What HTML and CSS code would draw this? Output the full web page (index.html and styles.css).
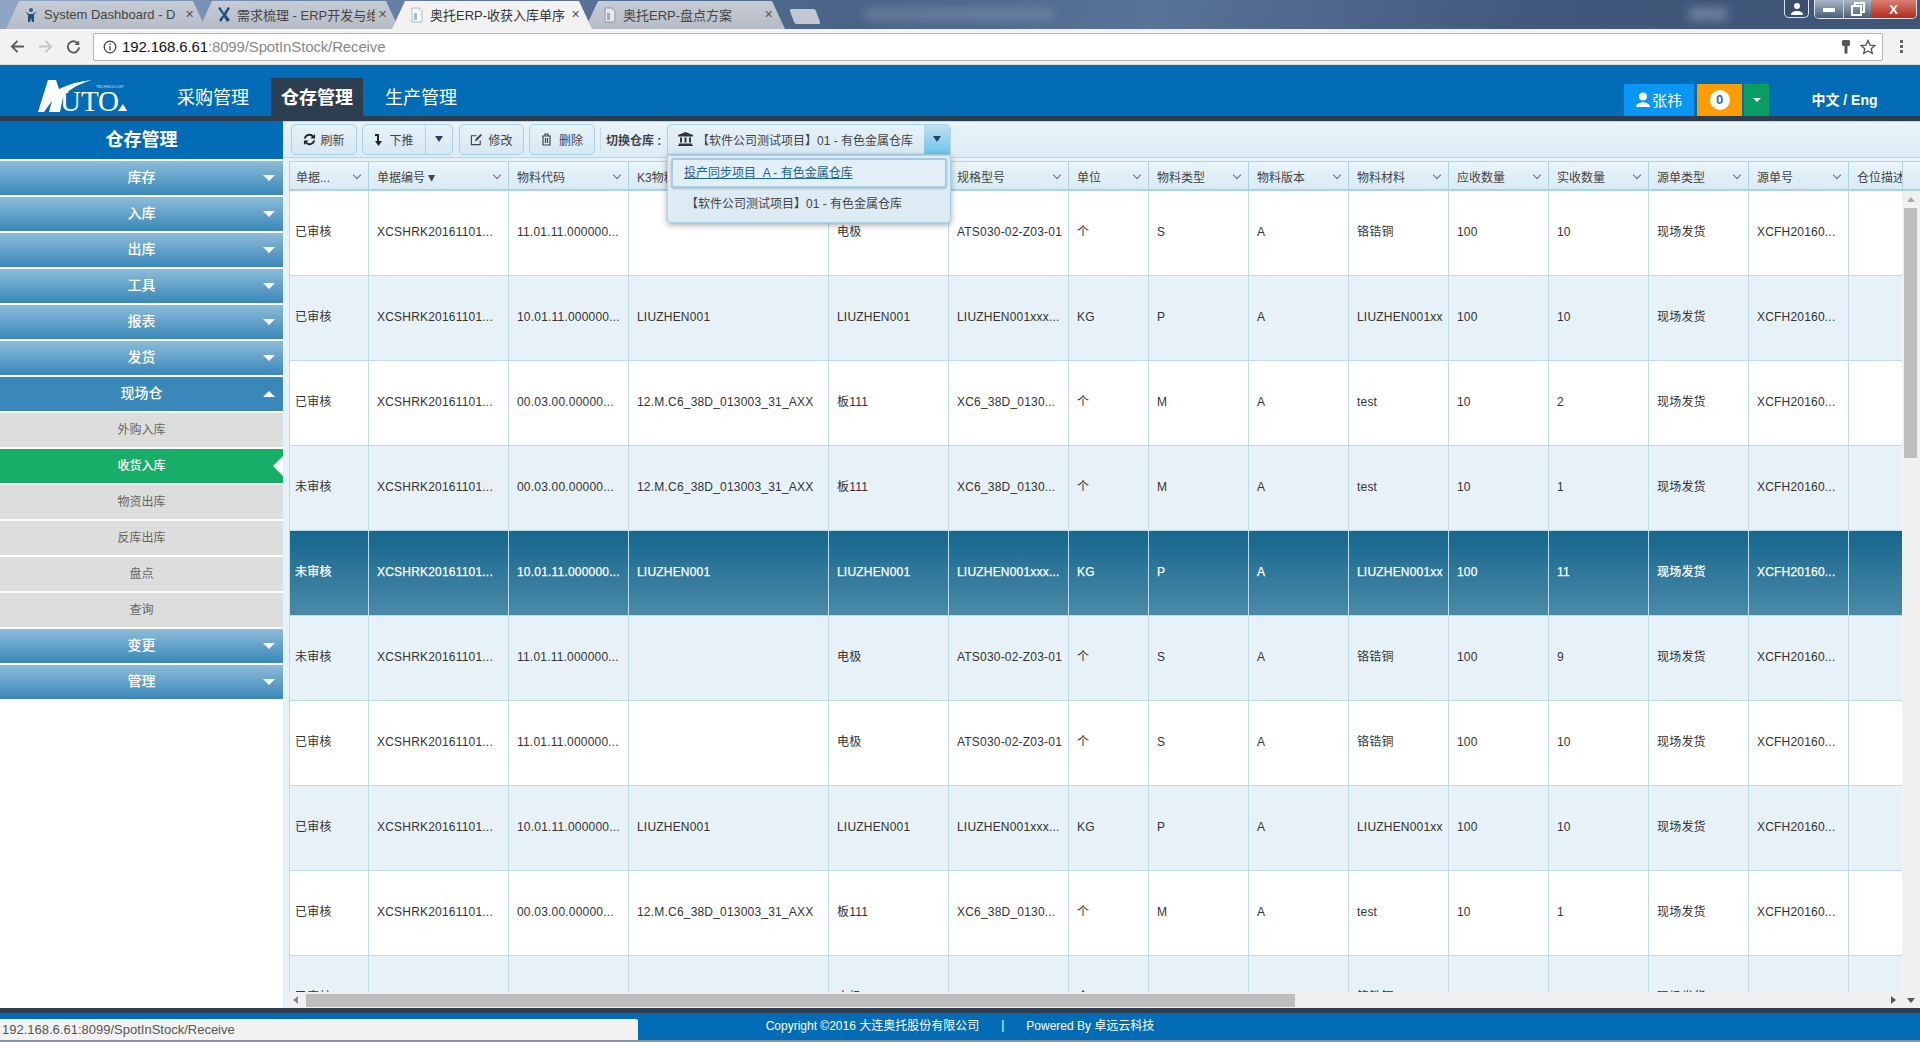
FILE: index.html
```html
<!DOCTYPE html>
<html lang="zh-CN">
<head>
    <meta charset="UTF-8">
    <title>奥托ERP-收获入库单序时簿</title>
    <link rel="stylesheet" href="styles.css">
</head>
<body>
<!-- browser frame -->
<div class="tabstrip">
    <div class="tab">
        <svg class="favicon" viewBox="0 0 16 16"><circle cx="8" cy="3" r="2" fill="#2a5f8f"/><path d="M2 4l3 4v7h2l1-4 1 4h2V8l3-4-4 3H6z" fill="#1d4f7c"/></svg>
        <span class="tab-title">System Dashboard - D</span><span class="tab-x">✕</span>
    </div>
    <div class="tab">
        <svg class="favicon" viewBox="0 0 16 16"><path d="M2 1l5 7-4 5 2 2 3-5 3 5 3-2-4-5 4-7-2-1-4 6-4-6z" fill="#1d4f7c"/></svg>
        <span class="tab-title">需求梳理 - ERP开发与维</span><span class="tab-x">✕</span>
    </div>
    <div class="tab tab-active">
        <svg class="favicon" viewBox="0 0 16 16"><path d="M3 1h7l3 3v11H3z" fill="#fff" stroke="#a9b8c6"/><path d="M5 6h3v7H5z" fill="#9cc0de"/></svg>
        <span class="tab-title">奥托ERP-收获入库单序</span><span class="tab-x">✕</span>
    </div>
    <div class="tab">
        <svg class="favicon" viewBox="0 0 16 16"><path d="M3 1h7l3 3v11H3z" fill="#e4e8ec" stroke="#8c9aa8"/><path d="M5 6h3v7H5z" fill="#8fb0cc"/></svg>
        <span class="tab-title">奥托ERP-盘点方案</span><span class="tab-x">✕</span>
    </div>
    <div class="newtab"></div>
    <div class="blur-title"></div>
    <div class="blur-small"></div>
    <div class="winbtns">
        <div class="winbtn winbtn-user">
            <svg width="14" height="14" viewBox="0 0 14 14"><circle cx="7" cy="4" r="3" fill="#fff"/><path d="M1 13c0-3 3-4 6-4s6 1 6 4z" fill="#fff"/></svg>
        </div>
        <div class="wingroup">
            <div class="winbtn winbtn-min"><i></i></div>
            <div class="winbtn winbtn-max">
                <svg width="14" height="14" viewBox="0 0 14 14" fill="none" stroke="#fff" stroke-width="2"><path d="M4 3V1h9v9h-2"/><path d="M1 4h9v9H1z"/></svg>
            </div>
            <div class="winbtn winbtn-close">X</div>
        </div>
    </div>
</div>
<div class="addrbar">
    <svg class="nav-icon" viewBox="0 0 16 16" fill="none" stroke="#5a5a5a" stroke-width="2"><path d="M15 8H2M8 2L2 8l6 6"/></svg>
    <svg class="nav-icon" viewBox="0 0 16 16" fill="none" stroke="#c4c4c4" stroke-width="2"><path d="M1 8h13M8 2l6 6-6 6"/></svg>
    <svg class="nav-icon" viewBox="0 0 16 16" fill="none" stroke="#5a5a5a" stroke-width="2"><path d="M13.5 6A6 6 0 1 0 14 9"/><path d="M14 1.5V6.5H9" fill="#5a5a5a" stroke="none"/></svg>
    <div class="urlbox">
        <svg class="info-icon" viewBox="0 0 14 14" fill="none" stroke="#444" stroke-width="1.3"><circle cx="7" cy="7" r="5.8"/><path d="M7 6v4.4M7 3.4v1.6"/></svg>
        <span class="url-host">192.168.6.61</span><span class="url-path">:8099/SpotInStock/Receive</span>
        <svg class="url-end" width="8" height="14" viewBox="0 0 8 14"><path d="M1 0h6l1 1v4l-1 1H5.500v7L4 14l-1.500-1V6H1L0 5V1z" fill="#555"/></svg>
        <svg class="url-star" width="16" height="16" viewBox="0 0 16 16" fill="none" stroke="#555" stroke-width="1.3"><path d="M8 1.5l2 4.6 4.9.4-3.7 3.2 1.1 4.8L8 12l-4.3 2.5 1.1-4.8L1.100 6.500 6 6.100z"/></svg>
    </div>
    <div class="menu-dots"><i></i><i></i><i></i></div>
</div>

<!-- app header -->
<div class="topbar">
    <svg class="logo" width="90" height="34" viewBox="0 0 90 34">
        <path d="M10 1h8l3 9C31 5 42 2 54 1 41 5 31 10 25 18l-3 15H11l3-11-8 11H0z" fill="#fff"/>
        <text x="58" y="9" class="logo-small" textLength="28" lengthAdjust="spacingAndGlyphs">TECHNOLOGY</text>
        <text x="22" y="32" class="logo-text" textLength="59" lengthAdjust="spacingAndGlyphs">UTO</text>
        <path d="M80 32l5-7 4 7z" fill="#fff"/>
    </svg>
    <a class="topnav">采购管理</a>
    <a class="topnav topnav-on">仓存管理</a>
    <a class="topnav">生产管理</a>
    <div class="userbox">
        <div class="user-name">
            <svg width="14" height="15" viewBox="0 0 14 15"><circle cx="7" cy="4.500" r="4" fill="#fff"/><path d="M0 15c0-3 3-4 7-5 4 1 7 2 7 5z" fill="#fff"/></svg>
            张祎
        </div>
        <div class="user-msg"><span class="msg-badge">0</span></div>
        <div class="user-more"><i></i></div>
        <div class="lang">中文 / Eng</div>
    </div>
</div>
<div class="darkline"></div>

<div class="main">
    <div class="sidebar">
        <div class="side-title">仓存管理</div>
        <div class="side-item">库存<i class="caret"></i></div>
        <div class="side-item">入库<i class="caret"></i></div>
        <div class="side-item">出库<i class="caret"></i></div>
        <div class="side-item">工具<i class="caret"></i></div>
        <div class="side-item">报表<i class="caret"></i></div>
        <div class="side-item">发货<i class="caret"></i></div>
        <div class="side-item side-open">现场仓<i class="caret caret-up"></i></div>
        <div class="side-sub">外购入库</div>
        <div class="side-sub side-cur">收货入库</div>
        <div class="side-sub">物资出库</div>
        <div class="side-sub">反库出库</div>
        <div class="side-sub">盘点</div>
        <div class="side-sub">查询</div>
        <div class="side-item">变更<i class="caret"></i></div>
        <div class="side-item">管理<i class="caret"></i></div>
    </div>

    <div class="content">
        <div class="toolbar">
            <div class="btn btn-refresh">
                <svg width="13" height="13" viewBox="0 0 14 14" fill="none" stroke="#222" stroke-width="2"><path d="M2 6a5 5 0 0 1 9-2"/><path d="M12 8a5 5 0 0 1-9 2"/><path d="M13 1v5H8z" fill="#222" stroke="none"/><path d="M1 13V8h5z" fill="#222" stroke="none"/></svg>
                刷新
            </div>
            <div class="btn btn-split">
                <span class="split-main">
                    <svg width="9" height="13" viewBox="0 0 9 13"><path d="M1 1h4v7h3l-3.500 5L1 8h2V3H1z" fill="#222"/></svg>
                    下推
                </span>
                <span class="split-caret"><i></i></span>
            </div>
            <div class="btn btn-edit">
                <svg width="13" height="13" viewBox="0 0 14 14" fill="none" stroke="#444" stroke-width="1.200"><path d="M11 8v4.500H1.500V3H7"/><path d="M5.500 9l.5-2.500L11.500 1 13 2.500 7.500 8z" fill="#444" stroke="none"/></svg>
                修改
            </div>
            <div class="btn btn-del">
                <svg width="11" height="13" viewBox="0 0 11 13" fill="none" stroke="#444" stroke-width="1.200"><path d="M1 3h9M4 3V1h3v2M2 3v9h7V3M4.500 5v5M6.500 5v5"/></svg>
                删除
            </div>
            <div class="tool-sep"></div>
            <label class="wh-label">切换仓库 :</label>
            <div class="wh-select">
                <span class="wh-current">
                    <svg width="15" height="14" viewBox="0 0 15 14"><path d="M7.500 0L15 3v1.500H0V3zM2 5.500h2v5H2zM6.500 5.500h2v5h-2zM11 5.500h2v5h-2zM1 11.500h13V13H1zM0 13h15v1H0z" fill="#333"/></svg>
                    【软件公司测试项目】01 - 有色金属仓库
                </span>
                <span class="wh-arrow"><i></i></span>
                <div class="wh-menu">
                    <div class="wh-opt wh-opt-hover">投产同步项目&nbsp; A - 有色金属仓库</div>
                    <div class="wh-opt">【软件公司测试项目】01 - 有色金属仓库</div>
                </div>
            </div>
        </div>

        <div class="gridwrap">
            <div class="grid-head">
                <div class="head-view">
                    <table class="gtable">
                        <colgroup><col class="c80"><col class="c140"><col class="c120"><col class="c200"><col class="c120"><col class="c120"><col class="c80"><col class="c100"><col class="c100"><col class="c100"><col class="c100"><col class="c100"><col class="c100"><col class="c100"><col class="c100"></colgroup>
                        <tr>
                            <th><div class="hc">单据...<i class="chev"></i></div></th>
                            <th><div class="hc"><span>单据编号 <b class="sort">▾</b></span><i class="chev"></i></div></th>
                            <th><div class="hc">物料代码<i class="chev"></i></div></th>
                            <th><div class="hc">K3物料代码<i class="chev"></i></div></th>
                            <th><div class="hc">物料名称<i class="chev"></i></div></th>
                            <th><div class="hc">规格型号<i class="chev"></i></div></th>
                            <th><div class="hc">单位<i class="chev"></i></div></th>
                            <th><div class="hc">物料类型<i class="chev"></i></div></th>
                            <th><div class="hc">物料版本<i class="chev"></i></div></th>
                            <th><div class="hc">物料材料<i class="chev"></i></div></th>
                            <th><div class="hc">应收数量<i class="chev"></i></div></th>
                            <th><div class="hc">实收数量<i class="chev"></i></div></th>
                            <th><div class="hc">源单类型<i class="chev"></i></div></th>
                            <th><div class="hc">源单号<i class="chev"></i></div></th>
                            <th><div class="hc">仓位描述<i class="chev"></i></div></th>
                        </tr>
                    </table>
                </div>
                <div class="head-fill"></div>
            </div>
            <div class="grid-mid">
                <div class="grid-body">
                    <table class="gtable">
                        <colgroup><col class="c80"><col class="c140"><col class="c120"><col class="c200"><col class="c120"><col class="c120"><col class="c80"><col class="c100"><col class="c100"><col class="c100"><col class="c100"><col class="c100"><col class="c100"><col class="c100"><col class="c100"></colgroup>
                        <tr><td>已审核</td><td>XCSHRK20161101...</td><td>11.01.11.000000...</td><td></td><td>电极</td><td>ATS030-02-Z03-01</td><td>个</td><td>S</td><td>A</td><td>铬锆铜</td><td>100</td><td>10</td><td>现场发货</td><td>XCFH20160...</td><td></td></tr>
                        <tr class="alt"><td>已审核</td><td>XCSHRK20161101...</td><td>10.01.11.000000...</td><td>LIUZHEN001</td><td>LIUZHEN001</td><td>LIUZHEN001xxx...</td><td>KG</td><td>P</td><td>A</td><td>LIUZHEN001xx</td><td>100</td><td>10</td><td>现场发货</td><td>XCFH20160...</td><td></td></tr>
                        <tr><td>已审核</td><td>XCSHRK20161101...</td><td>00.03.00.00000...</td><td>12.M.C6_38D_013003_31_AXX</td><td>板111</td><td>XC6_38D_0130...</td><td>个</td><td>M</td><td>A</td><td>test</td><td>10</td><td>2</td><td>现场发货</td><td>XCFH20160...</td><td></td></tr>
                        <tr class="alt"><td>未审核</td><td>XCSHRK20161101...</td><td>00.03.00.00000...</td><td>12.M.C6_38D_013003_31_AXX</td><td>板111</td><td>XC6_38D_0130...</td><td>个</td><td>M</td><td>A</td><td>test</td><td>10</td><td>1</td><td>现场发货</td><td>XCFH20160...</td><td></td></tr>
                        <tr class="sel"><td>未审核</td><td>XCSHRK20161101...</td><td>10.01.11.000000...</td><td>LIUZHEN001</td><td>LIUZHEN001</td><td>LIUZHEN001xxx...</td><td>KG</td><td>P</td><td>A</td><td>LIUZHEN001xx</td><td>100</td><td>11</td><td>现场发货</td><td>XCFH20160...</td><td></td></tr>
                        <tr class="alt"><td>未审核</td><td>XCSHRK20161101...</td><td>11.01.11.000000...</td><td></td><td>电极</td><td>ATS030-02-Z03-01</td><td>个</td><td>S</td><td>A</td><td>铬锆铜</td><td>100</td><td>9</td><td>现场发货</td><td>XCFH20160...</td><td></td></tr>
                        <tr><td>已审核</td><td>XCSHRK20161101...</td><td>11.01.11.000000...</td><td></td><td>电极</td><td>ATS030-02-Z03-01</td><td>个</td><td>S</td><td>A</td><td>铬锆铜</td><td>100</td><td>10</td><td>现场发货</td><td>XCFH20160...</td><td></td></tr>
                        <tr class="alt"><td>已审核</td><td>XCSHRK20161101...</td><td>10.01.11.000000...</td><td>LIUZHEN001</td><td>LIUZHEN001</td><td>LIUZHEN001xxx...</td><td>KG</td><td>P</td><td>A</td><td>LIUZHEN001xx</td><td>100</td><td>10</td><td>现场发货</td><td>XCFH20160...</td><td></td></tr>
                        <tr><td>已审核</td><td>XCSHRK20161101...</td><td>00.03.00.00000...</td><td>12.M.C6_38D_013003_31_AXX</td><td>板111</td><td>XC6_38D_0130...</td><td>个</td><td>M</td><td>A</td><td>test</td><td>10</td><td>1</td><td>现场发货</td><td>XCFH20160...</td><td></td></tr>
                        <tr class="alt"><td>已审核</td><td>XCSHRK20161101...</td><td>11.01.11.000000...</td><td></td><td>电极</td><td>ATS030-02-Z03-01</td><td>个</td><td>S</td><td>A</td><td>铬锆铜</td><td>100</td><td>10</td><td>现场发货</td><td>XCFH20160...</td><td></td></tr>
                    </table>
                </div>
                <div class="vbar">
                    <i class="arr-up"></i>
                    <div class="vthumb"></div>
                </div>
            </div>
            <div class="hbar">
                <i class="arr-left"></i>
                <div class="hthumb"></div>
                <i class="arr-right"></i>
                <div class="hbar-corner"><i class="arr-down"></i></div>
            </div>
        </div>
    </div>
</div>

<div class="darkline"></div>
<div class="footer">
    <span>Copyright ©2016 大连奥托股份有限公司</span>
    <span class="foot-sep">|</span>
    <span>Powered By 卓远云科技</span>
    <div class="statusbubble">192.168.6.61:8099/SpotInStock/Receive</div>
</div>
<div class="taskline"></div>
</body>
</html>
```

FILE: styles.css
```css
* {
    padding: 0;
    margin: 0;
    box-sizing: border-box;
}

html, body {
    height: 100%;
    overflow: hidden;
}

body {
    display: flex;
    flex-direction: column;
    width: 1920px;
    height: 1042px;
    font-family: "Liberation Sans", "Noto Sans CJK SC", sans-serif;
    font-size: 12px;
    color: #333;
    background: #fff;
}

/* browser frame */
.tabstrip {
    height: 29px;
    flex: none;
    display: flex;
    align-items: flex-end;
    padding-left: 6px;
    position: relative;
    background: linear-gradient(100deg, #8fa6c6 0, #5c769c 25%, #4a6488 45%, #587398 60%, #41587c 80%, #3e5578 100%);
}

.tab {
    width: 200px;
    height: 28px;
    margin-right: -7px;
    flex: none;
    display: flex;
    align-items: center;
    padding: 0 12px 1px 17px;
    background: linear-gradient(#c6ccd4, #b6bcc6);
    clip-path: polygon(0 100%, 13px 0, 187px 0, 100% 100%);
    font-size: 13px;
    color: #444;
}

.tab-active {
    background: #f2f2f2;
    color: #333;
    z-index: 1;
}

.favicon {
    width: 16px;
    height: 16px;
    flex: none;
    margin-right: 5px;
}

.tab-title {
    flex: 1;
    overflow: hidden;
    white-space: nowrap;
}

.tab-x {
    flex: none;
    margin-left: 3px;
    font-size: 11px;
    color: #555;
}

.newtab {
    width: 26px;
    height: 15px;
    margin: 0 0 5px 14px;
    background: #c2c8d2;
    transform: skewX(20deg);
    border-radius: 2px;
    flex: none;
}

.blur-title {
    width: 190px;
    height: 12px;
    margin: 0 0 9px 46px;
    background: rgba(150, 165, 190, 0.35);
    filter: blur(5px);
    flex: none;
}

.blur-small {
    width: 38px;
    height: 12px;
    margin: 0 193px 9px auto;
    background: rgba(170, 185, 205, 0.45);
    filter: blur(5px);
    flex: none;
}

.winbtns {
    position: absolute;
    top: 0;
    right: 3px;
    display: flex;
    gap: 5px;
}

.wingroup {
    display: flex;
    width: 103px;
    border: 1px solid #dfe4ea;
    border-top: 0;
    border-radius: 0 0 5px 5px;
    overflow: hidden;
}

.winbtn {
    height: 18px;
    display: flex;
    align-items: center;
    justify-content: center;
    background: linear-gradient(#a9b6c6, #4a5d78);
}

.winbtn-user {
    width: 25px;
    border: 1px solid #dfe4ea;
    border-top: 0;
    border-radius: 0 0 5px 5px;
    background: #3b4f6c;
}

.winbtn-min {
    width: 29px;
    border-right: 1px solid #c8d0da;
}

.winbtn-min i {
    width: 12px;
    height: 4px;
    margin-top: 2px;
    background: #fff;
}

.winbtn-max {
    width: 27px;
}

.winbtn-close {
    flex: 1;
    background: linear-gradient(#d98074, #b02c1c);
    color: #fff;
    font-weight: bold;
    font-size: 13px;
}

.addrbar {
    height: 36px;
    flex: none;
    display: flex;
    align-items: center;
    background: #f2f2f2;
    border-bottom: 1px solid #d8d8d8;
    padding-left: 10px;
}

.nav-icon {
    width: 15px;
    height: 15px;
    margin-right: 13px;
    flex: none;
}

.nav-icon:nth-of-type(3) {
    margin-right: 12px;
}

.urlbox {
    width: 1790px;
    height: 28px;
    flex: none;
    display: flex;
    align-items: center;
    padding: 0 6px 0 9px;
    background: #fff;
    border: 1px solid #b4b4b4;
    border-radius: 2px;
    font-size: 15px;
    letter-spacing: -0.14px;
}

.info-icon {
    width: 14px;
    height: 14px;
    margin-right: 5px;
}

.url-host {
    color: #111;
}

.url-path {
    color: #888;
}

.url-end {
    margin-left: auto;
    margin-right: 10px;
}

.menu-dots {
    margin-left: 17px;
    display: flex;
    flex-direction: column;
    gap: 2px;
}

.menu-dots i {
    width: 3px;
    height: 3px;
    background: #666;
}

/* app header */
.topbar {
    height: 51px;
    flex: none;
    display: flex;
    align-items: flex-end;
    padding-left: 38px;
    background: #026cb6;
}

.logo {
    margin: 0 39px 3px 0;
    flex: none;
}

.logo-text {
    font-family: "Liberation Serif", serif;
    font-size: 29px;
    fill: #fff;
}

.logo-small {
    font-family: "Liberation Sans", sans-serif;
    font-size: 4px;
    fill: #cfe3f2;
}

.topnav {
    width: 92px;
    height: 38px;
    margin-right: 12px;
    line-height: 40px;
    text-align: center;
    font-size: 18px;
    color: #fff;
}

.topnav-on {
    background: #2c3e50;
    font-weight: bold;
}

.userbox {
    margin-left: auto;
    height: 32px;
    display: flex;
    color: #fff;
}

.user-name {
    width: 70px;
    display: flex;
    align-items: center;
    justify-content: center;
    gap: 2px;
    padding-bottom: 1px;
    background: #0a96f5;
    font-size: 15px;
}

.user-msg {
    width: 45px;
    margin-left: 3px;
    display: flex;
    align-items: center;
    justify-content: center;
    background: #ff9c00;
}

.msg-badge {
    width: 20px;
    height: 20px;
    border-radius: 50%;
    background: #fff;
    color: #2a6fb0;
    text-align: center;
    line-height: 20px;
    font-size: 13px;
    font-weight: bold;
}

.user-more {
    width: 25px;
    margin-left: 2px;
    display: flex;
    align-items: center;
    justify-content: center;
    background: #0a9d62;
}

.user-more i {
    border: 4px solid transparent;
    border-top: 4px solid #fff;
    border-bottom: 0;
}

.lang {
    width: 151px;
    line-height: 32px;
    text-align: center;
    font-size: 14px;
    font-weight: bold;
}

.darkline {
    height: 5px;
    flex: none;
    background: #2c3e50;
}

.main {
    flex: 1;
    min-height: 0;
    display: flex;
}

/* left menu */
.sidebar {
    width: 283px;
    flex: none;
    display: flex;
    flex-direction: column;
    gap: 2px;
    background: #fff;
}

.side-title {
    height: 38px;
    line-height: 38px;
    text-align: center;
    background: #026cb6;
    color: #fff;
    font-size: 18px;
    font-weight: bold;
}

.side-item {
    height: 34px;
    line-height: 33px;
    text-align: center;
    position: relative;
    flex: none;
    color: #fff;
    font-size: 14px;
    font-weight: 500;
    background: linear-gradient(#8cbcd9, #3a87ba);
}

.side-open {
    background: #3a87ba;
}

.caret {
    position: absolute;
    right: 8px;
    top: 14px;
    border-left: 6px solid transparent;
    border-right: 6px solid transparent;
    border-top: 6px solid #fff;
}

.caret-up {
    border-top: 0;
    border-bottom: 6px solid #fff;
}

.side-sub {
    height: 34px;
    line-height: 34px;
    text-align: center;
    position: relative;
    flex: none;
    background: #dcdddc;
    color: #666;
}

.side-cur {
    background: #17ae67;
    color: #fff;
    font-weight: 500;
}

.side-cur::after {
    content: "";
    position: absolute;
    right: 0;
    top: 7px;
    border-top: 10px solid transparent;
    border-bottom: 10px solid transparent;
    border-right: 10px solid #fff;
}

/* right side */
.content {
    flex: 1;
    min-width: 0;
    display: flex;
    flex-direction: column;
    padding-left: 6px;
    background: #e6f1f8;
}

.toolbar {
    height: 37px;
    flex: none;
    margin-left: -6px;
    display: flex;
    align-items: center;
    padding: 0 0 1px 8px;
    background: linear-gradient(#e8f3f9, #dcecf5);
    border-top: 1px solid #b5d8e8;
    border-bottom: 1px solid #b5d8e8;
}

.btn {
    height: 31px;
    display: flex;
    align-items: center;
    justify-content: center;
    gap: 4px;
    background: linear-gradient(#e6f2f9, #d6e8f3);
    border: 1px solid #a9d3e6;
    border-radius: 5px;
    color: #444;
}

.btn-refresh {
    width: 66px;
    margin-right: 5px;
}

.btn-split {
    width: 91px;
    margin-right: 6px;
    gap: 0;
}

.split-main {
    width: 63px;
    height: 100%;
    display: flex;
    align-items: center;
    justify-content: center;
    gap: 6px;
    border-right: 1px solid #a9d3e6;
}

.split-caret {
    flex: 1;
    display: flex;
    justify-content: center;
}

.split-caret i,
.wh-arrow i {
    border-left: 4px solid transparent;
    border-right: 4px solid transparent;
    border-top: 6px solid #24445c;
}

.btn-edit {
    width: 65px;
    margin-right: 5px;
    gap: 5px;
}

.btn-del {
    width: 66px;
    gap: 7px;
}

.tool-sep {
    width: 1px;
    height: 24px;
    margin: 0 5px;
    background: #c4dce8;
}

.wh-label {
    width: 61px;
    font-weight: bold;
    color: #444;
    white-space: nowrap;
}

.wh-select {
    width: 284px;
    height: 31px;
    display: flex;
    position: relative;
    background: linear-gradient(#e6f2f9, #d6e8f3);
    border: 1px solid #a9d3e6;
    border-radius: 5px 5px 0 0;
}

.wh-current {
    flex: 1;
    display: flex;
    align-items: center;
    gap: 4px;
    padding-left: 10px;
    color: #444;
}

.wh-arrow {
    width: 26px;
    display: flex;
    align-items: center;
    justify-content: center;
    background: linear-gradient(#bfe0f0, #6ec3ec);
}

.wh-menu {
    position: absolute;
    left: -1px;
    top: 30px;
    width: 284px;
    height: 68px;
    z-index: 5;
    padding: 2px 3px;
    background: #dcebf4;
    border: 1px solid #a9d3e6;
    border-radius: 0 0 4px 4px;
    box-shadow: 0 2px 6px rgba(0, 0, 0, 0.35);
    color: #444;
}

.wh-opt {
    height: 30px;
    line-height: 30px;
    padding-left: 15px;
    white-space: nowrap;
}

.wh-opt:last-child {
    margin-top: 1px;
}

.wh-opt-hover {
    padding-left: 11px;
    line-height: 26px;
    border: 2px solid #a4cde2;
    border-radius: 3px;
    color: #1f6390;
    text-decoration: underline;
    background: #e2eff7;
    box-shadow: 0 1px 2px rgba(0, 0, 0, 0.2);
}

/* data grid */
.gridwrap {
    flex: 1;
    min-height: 0;
    margin-top: 3px;
    display: flex;
    flex-direction: column;
    background: #f0f0f0;
    overflow: hidden;
}

.grid-head {
    height: 30px;
    flex: none;
    display: flex;
    border-top: 1px solid #b5d8e8;
    background: linear-gradient(#e8f4fa, #d8eaf4);
}

.head-view {
    flex: 1;
    min-width: 0;
    overflow: hidden;
}

.gtable {
    table-layout: fixed;
    width: 1660px;
    border-collapse: separate;
    border-spacing: 0;
}

.c80 { width: 80px; }
.c100 { width: 100px; }
.c120 { width: 120px; }
.c140 { width: 140px; }
.c200 { width: 200px; }

.grid-head th {
    height: 29px;
    padding: 1px 7px 0 8px;
    font-weight: normal;
    text-align: left;
    white-space: nowrap;
    overflow: hidden;
    color: #444;
    border-right: 1px solid #a9d3e6;
    border-bottom: 2px solid #a9d3e6;
}

.grid-head th:first-child {
    padding-left: 6px;
    border-left: 1px solid #a9d3e6;
}

.hc {
    display: flex;
    justify-content: space-between;
    align-items: center;
}

.sort {
    font-size: 14px;
    font-weight: normal;
}

.chev {
    width: 6px;
    height: 6px;
    margin: -3px 1px 0 0;
    flex: none;
    border-right: 1px solid #668;
    border-bottom: 1px solid #668;
    transform: rotate(45deg);
}

.head-fill {
    width: 18px;
    flex: none;
    border-bottom: 2px solid #a9d3e6;
    border-left: 1px solid #a9d3e6;
}

.grid-mid {
    flex: 1;
    min-height: 0;
    display: flex;
}

.grid-body {
    flex: 1;
    min-width: 0;
    overflow: hidden;
    background: #fff;
}

.grid-body td {
    height: 85px;
    padding: 0 7px 3px 8px;
    line-height: 14px;
    letter-spacing: 0.2px;
    white-space: nowrap;
    overflow: hidden;
    color: #333;
    background: #fff;
    border-right: 1px solid #bcdcea;
    border-bottom: 1px solid #bcdcea;
}

.grid-body td:first-child {
    padding-left: 5px;
    border-left: 1px solid #bcdcea;
}

.grid-body .alt td {
    background: #e6f1f8;
}

.grid-body .sel td {
    background: linear-gradient(#16668d, #4a8aa8);
    color: #fff;
    -webkit-text-stroke: 0.25px #fff;
}

.vbar {
    width: 18px;
    flex: none;
    position: relative;
    background: #f0f0f0;
}

.vthumb {
    position: absolute;
    top: 17px;
    left: 2px;
    width: 13px;
    height: 250px;
    background: #bebebe;
}

.arr-up,
.arr-down,
.arr-left,
.arr-right {
    display: block;
    flex: none;
    width: 0;
    height: 0;
}

.arr-up {
    margin: 6px auto 0;
    border-left: 4px solid transparent;
    border-right: 4px solid transparent;
    border-bottom: 5px solid #aaa;
}

.arr-down {
    border-left: 4px solid transparent;
    border-right: 4px solid transparent;
    border-top: 5px solid #555;
}

.arr-left {
    margin: 0 6px 0 4px;
    border-top: 4px solid transparent;
    border-bottom: 4px solid transparent;
    border-right: 5px solid #888;
}

.arr-right {
    margin-left: auto;
    margin-right: 6px;
    border-top: 4px solid transparent;
    border-bottom: 4px solid transparent;
    border-left: 5px solid #555;
}

.hbar {
    height: 16px;
    flex: none;
    display: flex;
    align-items: center;
    background: #f0f0f0;
}

.hthumb {
    width: 989px;
    height: 13px;
    margin-left: 2px;
    background: #bebebe;
}

.hbar-corner {
    width: 18px;
    height: 16px;
    flex: none;
    display: flex;
    align-items: center;
    justify-content: center;
}

/* footer */
.footer {
    height: 27px;
    flex: none;
    display: flex;
    align-items: center;
    justify-content: center;
    padding-bottom: 4px;
    position: relative;
    background: #026cb6;
    color: #fff;
}

.foot-sep {
    margin: 0 22px;
}

.statusbubble {
    position: absolute;
    left: 0;
    bottom: 0;
    width: 638px;
    height: 21px;
    line-height: 21px;
    padding-left: 2px;
    font-size: 13px;
    background: #f2f2f2;
    border-radius: 0 2px 0 0;
    color: #555;
}

.taskline {
    height: 2px;
    flex: none;
    background: #8a929c;
}
```
